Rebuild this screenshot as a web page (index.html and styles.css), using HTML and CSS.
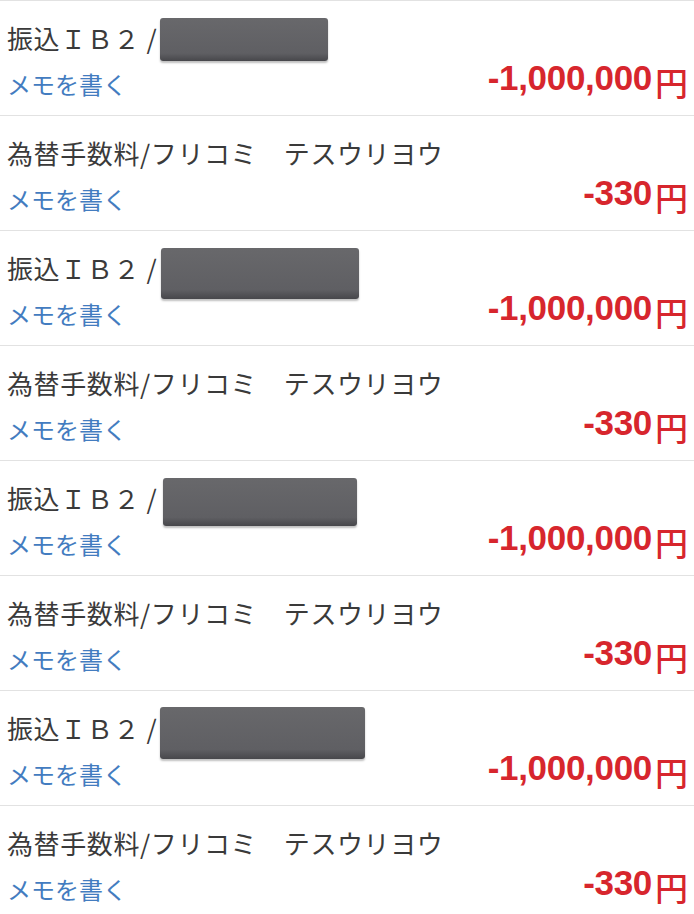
FILE: index.html
```html
<!DOCTYPE html>
<html lang="ja">

<head>
  <meta charset="UTF-8" />
  <meta name="viewport" content="width=device-width, initial-scale=1.0" />
  <title>入出金明細</title>
  <link rel="stylesheet" href="styles.css">
</head>

<body>
  <ul class="history">
    <li class="entry">
      <p class="entry-title">振込ＩＢ２ /<span class="mask mask-a"></span></p>
      <div class="entry-footer">
        <a class="entry-memo" href="#">メモを書く</a>
        <p class="entry-amount">-1,000,000<span class="yen">円</span></p>
      </div>
    </li>
    <li class="entry">
      <p class="entry-title">為替手数料/フリコミ　テスウリヨウ</p>
      <div class="entry-footer">
        <a class="entry-memo" href="#">メモを書く</a>
        <p class="entry-amount">-330<span class="yen">円</span></p>
      </div>
    </li>
    <li class="entry">
      <p class="entry-title">振込ＩＢ２ /<span class="mask mask-b"></span></p>
      <div class="entry-footer">
        <a class="entry-memo" href="#">メモを書く</a>
        <p class="entry-amount">-1,000,000<span class="yen">円</span></p>
      </div>
    </li>
    <li class="entry">
      <p class="entry-title">為替手数料/フリコミ　テスウリヨウ</p>
      <div class="entry-footer">
        <a class="entry-memo" href="#">メモを書く</a>
        <p class="entry-amount">-330<span class="yen">円</span></p>
      </div>
    </li>
    <li class="entry">
      <p class="entry-title">振込ＩＢ２ /<span class="mask mask-c"></span></p>
      <div class="entry-footer">
        <a class="entry-memo" href="#">メモを書く</a>
        <p class="entry-amount">-1,000,000<span class="yen">円</span></p>
      </div>
    </li>
    <li class="entry">
      <p class="entry-title">為替手数料/フリコミ　テスウリヨウ</p>
      <div class="entry-footer">
        <a class="entry-memo" href="#">メモを書く</a>
        <p class="entry-amount">-330<span class="yen">円</span></p>
      </div>
    </li>
    <li class="entry">
      <p class="entry-title">振込ＩＢ２ /<span class="mask mask-d"></span></p>
      <div class="entry-footer">
        <a class="entry-memo" href="#">メモを書く</a>
        <p class="entry-amount">-1,000,000<span class="yen">円</span></p>
      </div>
    </li>
    <li class="entry">
      <p class="entry-title">為替手数料/フリコミ　テスウリヨウ</p>
      <div class="entry-footer">
        <a class="entry-memo" href="#">メモを書く</a>
        <p class="entry-amount">-330<span class="yen">円</span></p>
      </div>
    </li>
  </ul>
</body>

</html>
```

FILE: styles.css
```css
* {
  box-sizing: border-box;
}

body {
  margin: 0;
  background: #fff;
  font-family: "Noto Sans CJK JP", sans-serif;
}

.history {
  margin: 0;
  padding: 0;
  list-style: none;
}

.entry {
  position: relative;
  height: 115px;
  border-top: 1px solid #e2e2e2;
  padding: 22px 6px 0 7px;
}

.entry-title {
  margin: 0;
  font-size: 26px;
  line-height: 30px;
  letter-spacing: 0.6px;
  color: #3a3a3a;
  white-space: nowrap;
}

.entry-footer {
  display: flex;
  justify-content: space-between;
  align-items: flex-end;
  margin-top: 7px;
}

.entry-memo {
  font-size: 24px;
  line-height: 30px;
  color: #437cc0;
  text-decoration: none;
}

.entry-amount {
  margin: 0;
  font-family: "Liberation Sans", Arial, sans-serif;
  font-weight: 700;
  font-size: 35px;
  line-height: 36px;
  letter-spacing: -0.3px;
  color: #d7262d;
}

.entry-amount .yen {
  font-family: "Noto Sans CJK JP", sans-serif;
  font-weight: 500;
  font-size: 33px;
  line-height: 1;
  vertical-align: -6px;
  margin-left: 3px;
  letter-spacing: 0;
}

/* 黒塗り部分 */
.mask {
  position: absolute;
  top: 17px;
  left: 160px;
  height: 44px;
  border-radius: 3px;
  background: linear-gradient(#68686b, #5f5f63 82%, #47474b);
  box-shadow: 0 2px 2px rgba(0, 0, 0, 0.25);
}

.mask-a {
  width: 168px;
  height: 43px;
}

.mask-b {
  left: 161px;
  width: 198px;
  height: 51px;
}

.mask-c {
  left: 163px;
  width: 194px;
  height: 48px;
}

.mask-d {
  width: 205px;
  top: 16px;
  height: 52px;
}
```
